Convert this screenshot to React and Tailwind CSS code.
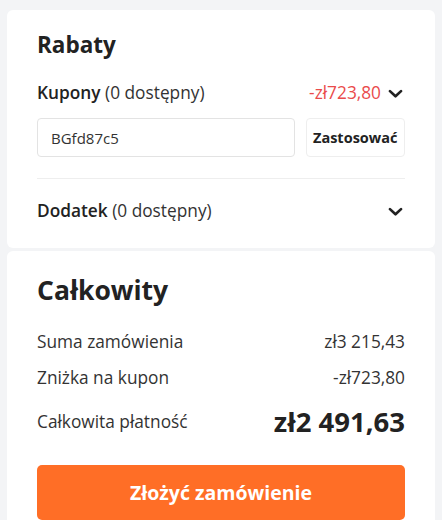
function Chevron() {
  return (
    <svg className="w-[19px] h-[19px] text-[#222]" viewBox="0 0 24 24" fill="none" stroke="currentColor" strokeWidth="3.4" strokeLinecap="round" strokeLinejoin="round">
      <path d="M5 9l7 6.5L19 9" />
    </svg>
  );
}

export default function App() {
  return (
    <div className="h-[520px] overflow-hidden bg-[#f3f4f6] pt-[10px] px-[7px] font-['Open_Sans',sans-serif] text-[#222]">
      <div className="bg-white rounded-[6px] px-[30px] pt-[18px] pb-[21px]">
        <h2 className="text-[22.5px] font-bold leading-[34px]">Rabaty</h2>
        <div className="mt-[15px] flex items-center justify-between h-[32px] text-[17.3px]">
          <div>
            <span className="font-semibold">Kupony</span> <span className="text-[#333]">(0 dostępny)</span>
          </div>
          <div className="flex items-center gap-[5px]">
            <span className="text-[#ea4b4b]">-zł723,80</span>
            <Chevron />
          </div>
        </div>
        <div className="mt-[9px] flex gap-[11px]">
          <input
            className="flex-1 h-[39px] border border-[#e3e3e3] rounded-[4px] px-[13px] text-[15px] text-[#333] outline-none"
            defaultValue="BGfd87c5"
          />
          <button className="w-[99px] h-[39px] border border-[#eeeeee] rounded-[4px] text-[14.5px] font-bold text-[#222] whitespace-nowrap overflow-hidden px-[6px] text-left">
            Zastosować
          </button>
        </div>
        <div className="mt-[21px] border-t border-[#eeeeee]" />
        <div className="mt-[16px] flex items-center justify-between h-[32px] text-[17.3px]">
          <div>
            <span className="font-semibold">Dodatek</span> <span className="text-[#333]">(0 dostępny)</span>
          </div>
          <Chevron />
        </div>
      </div>

      <div className="mt-[3px] bg-white rounded-[6px] px-[30px] pt-[19px] pb-[20px]">
        <h2 className="text-[26.5px] font-bold leading-[40px]">Całkowity</h2>
        <div className="mt-[17px] flex items-center justify-between h-[30px] text-[17.3px] text-[#333]">
          <span>Suma zamówienia</span>
          <span>zł3 215,43</span>
        </div>
        <div className="mt-[6px] flex items-center justify-between h-[30px] text-[17.3px] text-[#333]">
          <span>Zniżka na kupon</span>
          <span>-zł723,80</span>
        </div>
        <div className="mt-[9px] flex items-center justify-between h-[40px] text-[17.3px] text-[#333]">
          <span>Całkowita płatność</span>
          <span className="text-[27.5px] font-bold text-[#222]">zł2 491,63</span>
        </div>
        <button className="mt-[23px] w-full h-[55px] rounded-[5px] bg-[#ff6e26] text-white text-[19.5px] font-bold">
          Złożyć zamówienie
        </button>
      </div>
    </div>
  );
}
